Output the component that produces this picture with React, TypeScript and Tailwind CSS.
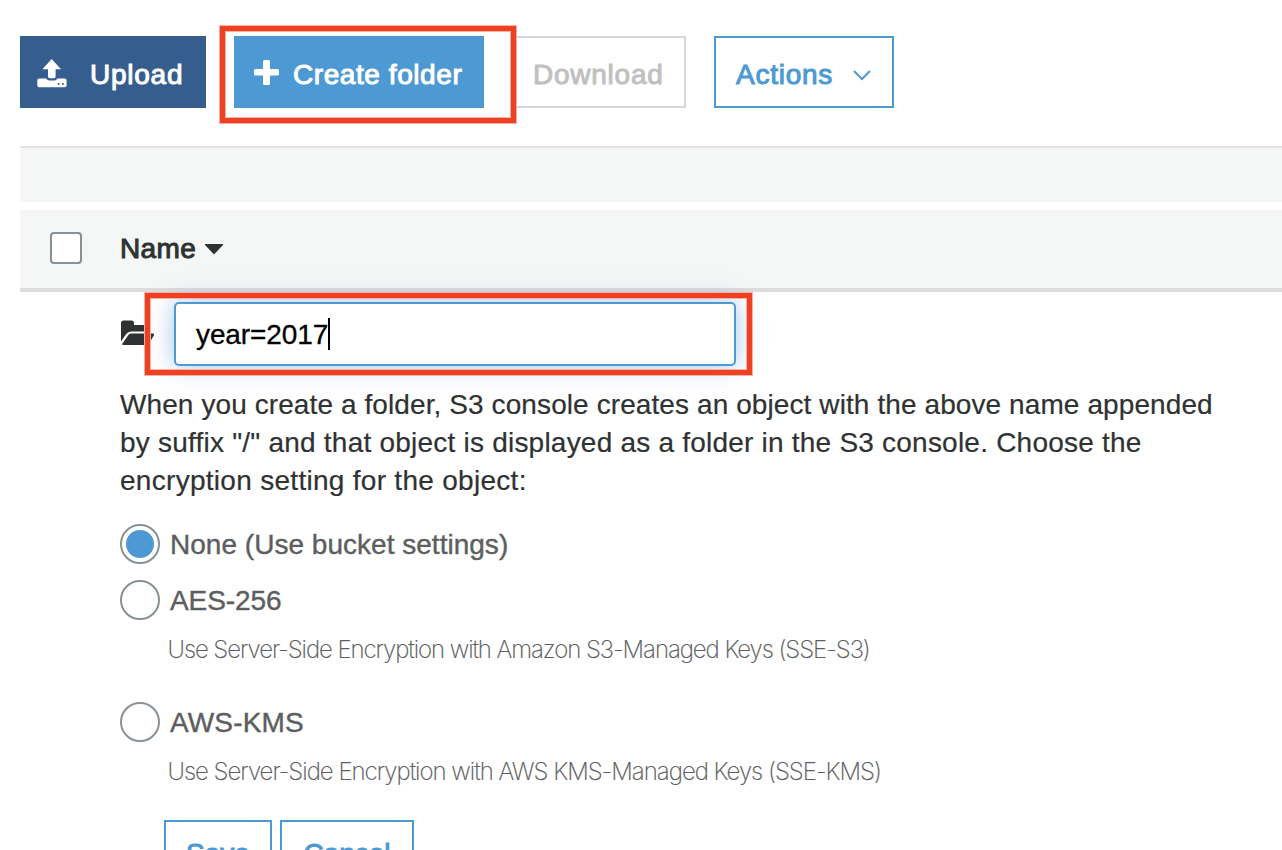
import React from "react";

const HELV = "font-['Liberation_Sans',Arial,sans-serif]";

function RedFrame({ className }: { className: string }) {
  return (
    <div
      className={
        "pointer-events-none absolute border-[5px] border-[#ee4023] shadow-[0_0_0_1px_#f7b0a3,inset_0_0_0_1px_#f7b0a3] " + className
      }
    />
  );
}

function UploadIcon() {
  return (
    <svg width="30" height="30" viewBox="0 0 30 30" fill="currentColor" className="mt-[4px]">
      <path d="M14.7 0 L24 10.2 H18.6 V17.6 Q18.6 19.2 17 19.2 H12.6 Q11 19.2 11 17.6 V10.2 H5.4 Z" />
      <path
        fillRule="evenodd"
        d="M2 19.5 H9.2 Q10.4 21.4 12.2 21.4 H17.5 Q19.3 21.4 20.4 19.5 H27.6 Q29.6 19.5 29.6 21.2 V26.6 Q29.6 28.3 27.6 28.3 H2 Q0.3 28.3 0.3 26.6 V21.2 Q0.3 19.5 2 19.5 Z M20.7 24 V25.8 H22.5 V24 Z M25 24 V25.8 H26.8 V24 Z"
      />
    </svg>
  );
}

function FolderIcon() {
  return (
    <svg width="34" height="26" viewBox="0 0 34 26" fill="#2f3232">
      <path d="M0 21.5 V3 Q0 0.5 2.5 0.5 H10.5 Q13 0.5 13 3 V5 H24.5 Q27 5 27 7.5 V11.4 H10 Q7 11.4 5.2 14 Z" />
      <path d="M1.4 23.5 L7.2 15.2 Q8.2 13.4 10 13.4 H32 Q33.8 13.4 32.9 15.2 L28.2 23.4 Q27.2 25 25.4 25 H2.2 Q0.6 25 1.4 23.5 Z" />
    </svg>
  );
}

function Radio({ label, checked, tracking }: { label: string; checked?: boolean; tracking: string }) {
  return (
    <div className="flex h-10 items-center gap-[10px]">
      <span className="flex size-10 shrink-0 items-center justify-center rounded-full border-2 border-[#879196]">
        {checked && <span className="size-7 rounded-full bg-[#4d99d3]" />}
      </span>
      <span
        className={
          "whitespace-nowrap pt-[2px] text-[28px] leading-[38px] text-[#5c5e5f] [-webkit-text-stroke:0.4px] " + tracking
        }
      >
        {label}
      </span>
    </div>
  );
}

export default function App() {
  return (
    <div className={"relative h-[850px] w-[1282px] overflow-hidden bg-white text-[28px] leading-[38px] " + HELV}>
      <div className="flex h-[146px] items-start pl-5 pt-9">
        <button className="flex h-[72px] w-[186px] items-center bg-[#355e8f] pl-[17px] text-white">
          <UploadIcon />
          <span className="ml-[23px] pt-[5px] tracking-[0.75px] [-webkit-text-stroke:1px]">Upload</span>
        </button>
        <button className="ml-7 flex h-[72px] w-[250px] items-center bg-[#4d99d3] pl-5 text-white">
          <svg width="25" height="25" viewBox="0 0 25 25" fill="currentColor" className="mt-px">
            <path d="M10.5 0 H14.5 Q16 0 16 1.5 V9 H23.5 Q25 9 25 10.5 V14 Q25 15.5 23.5 15.5 H16 V23.5 Q16 25 14.5 25 H10.5 Q9 25 9 23.5 V15.5 H1.5 Q0 15.5 0 14 V10.5 Q0 9 1.5 9 H9 V1.5 Q9 0 10.5 0 Z" />
          </svg>
          <span className="ml-[14px] whitespace-nowrap pt-[5px] tracking-[0.57px] [-webkit-text-stroke:1px]">Create folder</span>
        </button>
        <button className="ml-7 flex h-[72px] w-[174px] items-center border-2 border-[#d5d6d7] pl-[19px] text-[#bfc1c1]">
          <span className="pt-[5px] tracking-[0.75px] [-webkit-text-stroke:1px]">Download</span>
        </button>
        <button className="ml-7 flex h-[72px] w-[180px] items-center border-2 border-[#4d99d3] pl-5 text-[#4d99d3]">
          <span className="pt-[5px] tracking-[0.75px] [-webkit-text-stroke:1px]">Actions</span>
          <svg width="18" height="11" viewBox="0 0 18 11" className="ml-[19.5px] mt-[6px]" fill="none" stroke="currentColor" strokeWidth="2">
            <path d="M1 1 L9 9 L17 1" />
          </svg>
        </button>
      </div>

      <div className="ml-5 h-14 border-t-2 border-[#e3e4e4] bg-[#f5f7f6]" />
      <div className="ml-5 mt-2 flex h-[82px] items-center border-b-4 border-[#dcdcdc] bg-[#f5f7f6] pl-[30px]">
        <span className="mb-[2px] size-8 shrink-0 rounded-[4px] border-2 border-[#879196] bg-white" />
        <span className="ml-[38px] tracking-[0.35px] text-[#2f3232] [-webkit-text-stroke:1px]">Name</span>
        <svg width="18" height="11" viewBox="0 0 18 11" className="ml-[9px]" fill="#2f3232">
          <path d="M0 0 H18 V1 L9.7 9.8 Q9 10.5 8.3 9.8 L0 1 Z" />
        </svg>
      </div>

      <div className="pl-[120px]">
        <div className="flex h-[94px] items-start pt-[10px]">
          <div className="mt-[18px] w-[54px] pl-px">
            <FolderIcon />
          </div>
          <div className="flex h-16 w-[562px] items-center rounded-[5px] border-2 border-[#4d99d3] bg-white pl-5 text-black shadow-[0_0_20px_rgba(77,140,211,0.42),0_0_40px_rgba(77,130,211,0.1)]">
            <span className="pt-[2px] tracking-[-0.1px] [-webkit-text-stroke:0.3px]">year=2017</span>
            <span className="h-8 w-[2px] bg-black" />
          </div>
        </div>
        <div className="whitespace-nowrap text-[#2f3232] [-webkit-text-stroke:0.2px]">
          <div className="tracking-[0.094px]">
            When you create a folder, S3 console creates an object with the above name appended
          </div>
          <div className="tracking-[0.22px]">
            by suffix "/" and that object is displayed as a folder in the S3 console. Choose the
          </div>
          <div className="tracking-[0.29px]">encryption setting for the object:</div>
        </div>
        <div className="mt-6">
          <Radio label="None (Use bucket settings)" checked tracking="tracking-[0.02px]" />
        </div>
        <div className="mt-4">
          <Radio label="AES-256" tracking="tracking-[-0.1px]" />
        </div>
        <p className="ml-[47.5px] mt-3 whitespace-nowrap font-['Inter','Liberation_Sans',sans-serif] text-[24px] font-extralight leading-[36px] tracking-[-1.07px] text-[#5c5e5f] [-webkit-text-stroke:0.2px]">
          Use Server-Side Encryption with Amazon S3-Managed Keys (SSE-S3)
        </p>
        <div className="mt-[34px]">
          <Radio label="AWS-KMS" tracking="tracking-[0.15px]" />
        </div>
        <p className="ml-[47.5px] mt-3 whitespace-nowrap font-['Inter','Liberation_Sans',sans-serif] text-[24px] font-extralight leading-[36px] tracking-[-1.01px] text-[#5c5e5f] [-webkit-text-stroke:0.2px]">
          Use Server-Side Encryption with AWS KMS-Managed Keys (SSE-KMS)
        </p>
        <div className="ml-11 mt-[30px] flex gap-2 text-[#4d99d3] [-webkit-text-stroke:1px]">
          <button className="h-[68px] w-[108px] border-2 border-[#4d99d3]">Save</button>
          <button className="h-[68px] w-[134px] border-2 border-[#4d99d3]">Cancel</button>
        </div>
      </div>

      <RedFrame className="left-[220px] top-[26px] h-[97px] w-[296px]" />
      <RedFrame className="left-[145px] top-[293px] h-[82px] w-[607px]" />
    </div>
  );
}
